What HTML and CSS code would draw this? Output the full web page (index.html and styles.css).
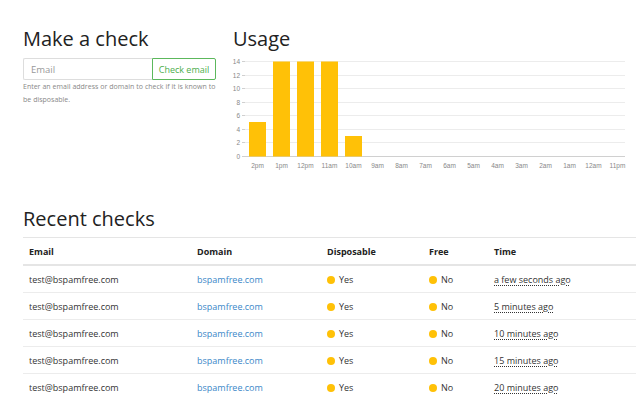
FILE: index.html
```html
<!DOCTYPE html>
<html>
<head>
<meta charset="utf-8">
<link rel="stylesheet" href="styles.css">
</head>
<body>
<div class="page">
  <div class="top">
    <section class="check">
      <h2>Make a check</h2>
      <form class="form">
        <input class="email" type="text" placeholder="Email">
        <button class="btn" type="button">Check email</button>
      </form>
      <p class="help">Enter an email address or domain to check if it is known to be disposable.</p>
    </section>
    <section class="usage">
      <h2>Usage</h2>
      <svg class="chart" width="400" height="120" viewBox="0 0 400 120">
        <g stroke="#ececec" stroke-width="1">
          <line x1="12" y1="6.5" x2="392" y2="6.5"/>
          <line x1="12" y1="20.5" x2="392" y2="20.5"/>
          <line x1="12" y1="33.5" x2="392" y2="33.5"/>
          <line x1="12" y1="47.5" x2="392" y2="47.5"/>
          <line x1="12" y1="60.5" x2="392" y2="60.5"/>
          <line x1="12" y1="74.5" x2="392" y2="74.5"/>
          <line x1="12" y1="87.5" x2="392" y2="87.5"/>
        </g>
        <g stroke="#d0d0d0" stroke-width="1">
          <line x1="9" y1="101.5" x2="392" y2="101.5"/>
          <line x1="9" y1="6.5" x2="12" y2="6.5"/>
          <line x1="9" y1="20.5" x2="12" y2="20.5"/>
          <line x1="9" y1="33.5" x2="12" y2="33.5"/>
          <line x1="9" y1="47.5" x2="12" y2="47.5"/>
          <line x1="9" y1="60.5" x2="12" y2="60.5"/>
          <line x1="9" y1="74.5" x2="12" y2="74.5"/>
          <line x1="9" y1="87.5" x2="12" y2="87.5"/>
        </g>
        <g class="ylab" text-anchor="end">
          <text x="7" y="9">14</text>
          <text x="7" y="22.5">12</text>
          <text x="7" y="36">10</text>
          <text x="7" y="49.5">8</text>
          <text x="7" y="63">6</text>
          <text x="7" y="76.5">4</text>
          <text x="7" y="90">2</text>
          <text x="7" y="104">0</text>
        </g>
        <g fill="#ffc107">
          <rect x="16" y="67" width="17" height="34.5"/>
          <rect x="40" y="6.5" width="17" height="95"/>
          <rect x="64" y="6.5" width="17" height="95"/>
          <rect x="88" y="6.5" width="17" height="95"/>
          <rect x="112" y="81" width="17" height="20.5"/>
        </g>
        <g class="xlab" text-anchor="middle">
          <text x="24.5" y="113">2pm</text>
          <text x="48.5" y="113">1pm</text>
          <text x="72.5" y="113">12pm</text>
          <text x="96.5" y="113">11am</text>
          <text x="120.5" y="113">10am</text>
          <text x="144.5" y="113">9am</text>
          <text x="168.5" y="113">8am</text>
          <text x="192.5" y="113">7am</text>
          <text x="216.5" y="113">6am</text>
          <text x="240.5" y="113">5am</text>
          <text x="264.5" y="113">4am</text>
          <text x="288.5" y="113">3am</text>
          <text x="312.5" y="113">2am</text>
          <text x="336.5" y="113">1am</text>
          <text x="360.5" y="113">12am</text>
          <text x="384.5" y="113">11pm</text>
        </g>
      </svg>
    </section>
  </div>

  <section class="recent">
    <h2>Recent checks</h2>
    <table class="table">
      <colgroup>
        <col class="c1"><col class="c2"><col class="c3"><col class="c4"><col class="c5">
      </colgroup>
      <thead>
        <tr><th>Email</th><th>Domain</th><th>Disposable</th><th>Free</th><th>Time</th></tr>
      </thead>
      <tbody>
        <tr><td>test@bspamfree.com</td><td><a href="#">bspamfree.com</a></td><td><span class="dot"></span>Yes</td><td><span class="dot"></span>No</td><td><abbr>a few seconds ago</abbr></td></tr>
        <tr><td>test@bspamfree.com</td><td><a href="#">bspamfree.com</a></td><td><span class="dot"></span>Yes</td><td><span class="dot"></span>No</td><td><abbr>5 minutes ago</abbr></td></tr>
        <tr><td>test@bspamfree.com</td><td><a href="#">bspamfree.com</a></td><td><span class="dot"></span>Yes</td><td><span class="dot"></span>No</td><td><abbr>10 minutes ago</abbr></td></tr>
        <tr><td>test@bspamfree.com</td><td><a href="#">bspamfree.com</a></td><td><span class="dot"></span>Yes</td><td><span class="dot"></span>No</td><td><abbr>15 minutes ago</abbr></td></tr>
        <tr><td>test@bspamfree.com</td><td><a href="#">bspamfree.com</a></td><td><span class="dot"></span>Yes</td><td><span class="dot"></span>No</td><td><abbr>20 minutes ago</abbr></td></tr>
      </tbody>
    </table>
  </section>
</div>
</body>
</html>
```

FILE: styles.css
```css
html, body {
  margin: 0;
  padding: 0;
  background: #fff;
}
body {
  font-family: "Open Sans", "Noto Sans", sans-serif;
  color: #333;
  overflow: hidden;
}
.page {
  padding: 0 0 0 23px;
  width: 613px;
}
h2 {
  font-weight: 400;
  font-size: 20px;
  line-height: 24px;
  margin: 0;
  color: #222;
}
.top {
  display: grid;
  grid-template-columns: 193px 1fr;
  column-gap: 17px;
  padding-top: 27px;
  height: 150px;
}
.form {
  display: flex;
  margin-top: 7px;
  height: 22px;
}
.email {
  flex: 1;
  min-width: 0;
  box-sizing: border-box;
  height: 22px;
  border: 1px solid #ddd;
  border-right: none;
  padding: 0 7px;
  font-family: inherit;
  font-size: 9.5px;
  color: #333;
  outline: none;
  border-radius: 2px 0 0 2px;
}
.email::placeholder {
  color: #999;
}
.btn {
  box-sizing: border-box;
  width: 64px;
  height: 22px;
  border: 1px solid #5cb85c;
  background: #fff;
  color: #4cae4c;
  font-family: inherit;
  font-size: 9px;
  padding: 0;
  border-radius: 0 2px 2px 0;
}
.help {
  margin: 0;
  font-size: 7px;
  word-spacing: 0.15px;
  line-height: 13px;
  color: #888;
}
.chart {
  display: block;
  margin-top: 4px;
  overflow: visible;
}
.ylab text, .xlab text {
  font-family: "Liberation Sans", Arial, sans-serif;
  font-size: 6.5px;
  fill: #888;
}
.recent h2 {
  margin-top: 30px;
}
.table {
  margin-top: 6px;
  border-collapse: collapse;
  width: 613px;
  font-size: 9px;
  table-layout: fixed;
}
.c1 { width: 168px; }
.c2 { width: 130px; }
.c3 { width: 102px; }
.c4 { width: 65px; }
.c5 { width: 148px; }
.table th {
  text-align: left;
  font-weight: 700;
  color: #222;
  padding: 0 6px;
  height: 26px;
  border-top: 1px solid #e5e5e5;
  border-bottom: 2px solid #e5e5e5;
}
.table td {
  padding: 0 6px;
  height: 26px;
  border-bottom: 1px solid #ececec;
  color: #333;
}
.table a {
  color: #3a87c8;
  text-decoration: none;
}
.dot {
  display: inline-block;
  width: 8px;
  height: 8px;
  border-radius: 50%;
  background: #ffc107;
  margin-right: 4px;
  vertical-align: -1px;
}
abbr {
  text-decoration: underline dotted;
  text-underline-offset: 2px;
}
```
